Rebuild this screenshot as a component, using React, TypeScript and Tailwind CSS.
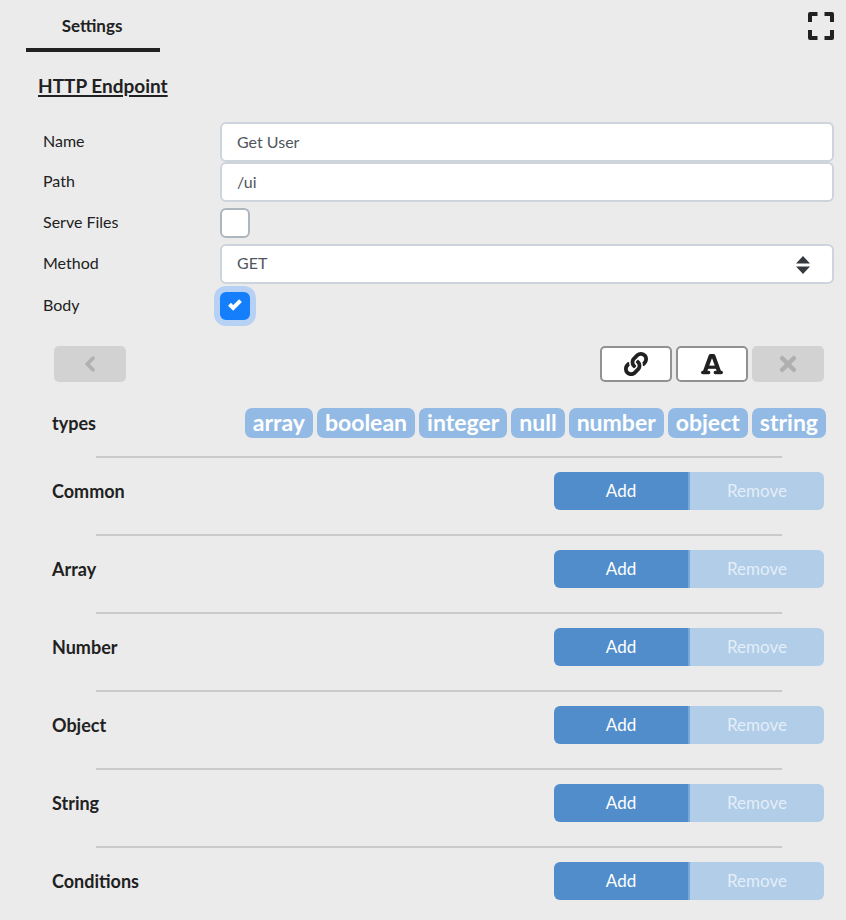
import { FaLink, FaTimes } from "react-icons/fa";

const types = ["array", "boolean", "integer", "null", "number", "object", "string"];
const sections = ["Common", "Array", "Number", "Object", "String", "Conditions"];

const labelClass = "w-[177px] shrink-0 pb-[3px] text-[16px] leading-[20px]";
const fieldClass =
  "h-10 min-w-0 flex-1 rounded-[6px] border-2 border-[#ced4dc] bg-white px-[15px] pb-[2px] text-[16px] text-[#4f565d] outline-none";
const checkClass =
  "w-[30px] appearance-none rounded-[6px] border-2 border-[#adb5bd] bg-white checked:border-[#147efb] checked:bg-[#147efb]";

function TextField({ id, label, value }: { id: string; label: string; value: string }) {
  return (
    <div className="flex items-center">
      <label htmlFor={id} className={labelClass}>{label}</label>
      <input id={id} type="text" defaultValue={value} className={fieldClass} />
    </div>
  );
}

function Fullscreen() {
  return (
    <svg width="26" height="28" viewBox="0 0 26 28" fill="none" stroke="#212121" strokeWidth="4" strokeLinejoin="round">
      <path d="M2 10V2H9.500M16.500 2H24V10M24 18V26H16.500M9.500 26H2V18" />
    </svg>
  );
}

function SerifFontIcon() {
  return (
    <svg width="24" height="24" viewBox="0 0 24 24" fill="none" stroke="currentColor" strokeLinejoin="round">
      <path d="M4.800 20L10.600 4H13.400L19.200 20" strokeWidth="4" />
      <path d="M7.500 15.200H16.500" strokeWidth="3.200" />
      <path d="M2.800 20.500H8.600M15.400 20.500H21.200" strokeWidth="3.600" strokeLinecap="round" />
    </svg>
  );
}

function Section({ name }: { name: string }) {
  return (
    <section>
      <hr className="ml-[44px] mr-[42px] border-t-2 border-[#cacacc]" />
      <div className="flex h-[76px] items-start justify-between pt-[14px]">
        <h2 className="text-[18px] leading-[38px] font-bold">{name}</h2>
        <div className="flex h-[38px] w-[270px] overflow-hidden rounded-[6px] text-[17px] text-white">
          <button type="button" className="flex-1 bg-[#508dca]">Add</button>
          <span className="w-[2px] bg-[#79a9da]" />
          <button type="button" disabled className="flex-1 bg-[#b1cde8] text-[#e4eef8]">Remove</button>
        </div>
      </div>
    </section>
  );
}

export default function App() {
  return (
    <main className="min-h-screen bg-[#ebebec] font-[Lato,'Open_Sans',sans-serif] text-[#212121]">
      <header className="flex items-start justify-between pl-[26px] pr-3">
        <button type="button" className="h-[52px] w-[134px] border-b-4 border-[#212121] pr-[2px] pt-1 text-[17px] font-bold">
          Settings
        </button>
        <button type="button" aria-label="Full screen" className="mt-3"><Fullscreen /></button>
      </header>

      <h1 className="ml-[38px] mt-[22px] text-[19px] leading-[24px] font-bold underline decoration-2 underline-offset-2">
        HTTP Endpoint
      </h1>

      <form className="mt-6 pl-[43px] pr-3">
        <TextField id="name" label="Name" value="Get User" />
        <TextField id="path" label="Path" value="/ui" />
        <div className="flex h-[42px] items-center">
          <label htmlFor="serve" className={labelClass}>Serve Files</label>
          <input id="serve" type="checkbox" className={`${checkClass} h-[30px]`} />
        </div>
        <div className="flex items-center">
          <label htmlFor="method" className={labelClass}>Method</label>
          <div className="relative flex min-w-0 flex-1">
            <select id="method" defaultValue="GET" className={`${fieldClass} appearance-none`}>
              <option>GET</option>
              <option>POST</option>
            </select>
            <svg className="pointer-events-none absolute right-6 top-[12px]" width="14" height="18" viewBox="0 0 14 18" fill="#343a40">
              <path d="M7 0L14 7.500H0ZM0 10.500H14L7 18Z" />
            </svg>
          </div>
        </div>
        <div className="flex h-11 items-center">
          <label htmlFor="body" className={labelClass}>Body</label>
          <div className="relative flex">
            <input id="body" type="checkbox" defaultChecked className={`${checkClass} h-7 ring-[6px] ring-[#b6d1f3]`} />
            <svg className="pointer-events-none absolute left-2 top-[7px]" width="14" height="12" viewBox="0 0 14 12" fill="none" stroke="white" strokeWidth="4">
              <path d="M1.500 5.300L5.200 8.900L12.500 1.700" />
            </svg>
          </div>
        </div>
      </form>

      <div className="mt-[18px] flex gap-1 pl-[54px] pr-[22px]">
        <button type="button" disabled aria-label="Back" className="mr-auto flex h-9 w-[72px] items-center justify-center rounded-[5px] bg-[#d2d2d2] text-[#b0b0b0]">
          <svg width="10" height="16" viewBox="0 0 10 16" fill="none" stroke="currentColor" strokeWidth="3.600" strokeLinecap="round" strokeLinejoin="round">
            <path d="M8 2.200L2.200 8L8 13.800" />
          </svg>
        </button>
        <button type="button" aria-label="Link" className="flex h-9 w-[72px] items-center justify-center rounded-[5px] border-2 border-[#919191] bg-white">
          <FaLink size={24} />
        </button>
        <button type="button" aria-label="Text" className="flex h-9 w-[72px] items-center justify-center rounded-[5px] border-2 border-[#919191] bg-white">
          <SerifFontIcon />
        </button>
        <button type="button" disabled aria-label="Remove" className="flex h-9 w-[72px] items-center justify-center rounded-[5px] bg-[#d2d2d2] text-[#b0b0b0]">
          <FaTimes size={24} />
        </button>
      </div>

      <div className="mt-[26px] flex h-[30px] items-center justify-between pl-[52px] pr-5">
        <h2 className="text-[18px] leading-[30px] font-bold">types</h2>
        <div className="flex gap-1 text-[23px] leading-[28px] font-bold text-white">
          {types.map((type) => (
            <button key={type} type="button" className="h-[30px] rounded-[7px] bg-[#92bae4] px-2 pb-[2px]">{type}</button>
          ))}
        </div>
      </div>

      <div className="mt-[18px] pl-[52px] pr-[22px]">
        {sections.map((name) => <Section key={name} name={name} />)}
      </div>
    </main>
  );
}
